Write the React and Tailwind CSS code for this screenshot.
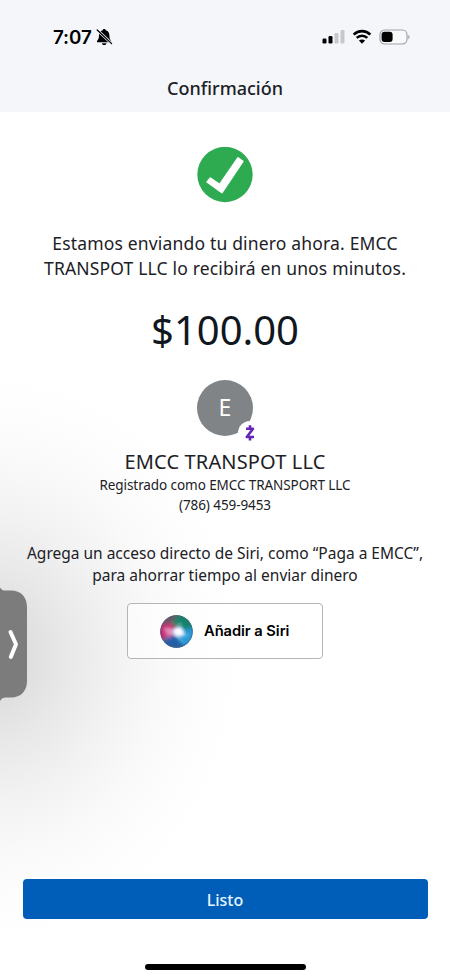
function StatusBar() {
  return (
    <div className="flex h-[74px] items-center justify-between pl-[53px] pr-[39px]">
      <div className="flex items-center gap-[4px]">
        <span className="mt-[2px] font-['Inter'] text-[18.8px] font-semibold leading-6 tracking-[-0.1px] text-black">7:07</span>
        <svg width="17" height="18" viewBox="0 0 17 18">
          <path d="M8.200 1C9.100 1 9.600 1.500 9.700 2.300C12.500 3 13.400 5 13.400 7.600C13.400 10.800 14.400 11.600 15.200 13V14.200H1V13C2 11.600 3 10.800 3 7.600C3 5 4 3 6.700 2.300C6.800 1.500 7.300 1 8.200 1Z" fill="#000" />
          <path d="M5.900 15.200H10.500C10.200 16.500 9.400 17 8.200 17S6.200 16.500 5.900 15.200Z" fill="#000" />
          <path d="M1.200 2L15.600 15.600" stroke="#f4f6fa" strokeWidth="2.700" />
          <path d="M1.200 2L15.600 15.600" stroke="#000" strokeWidth="1.300" strokeLinecap="round" />
        </svg>
      </div>
      <div className="flex items-center">
        <svg width="23" height="16" viewBox="0 0 23 16">
          <rect x="0.500" y="9.500" width="4" height="5" rx="1.200" fill="#000" />
          <rect x="6.500" y="7" width="4" height="7.500" rx="1.200" fill="#000" />
          <rect x="12.500" y="4" width="4" height="10.500" rx="1.200" fill="#c6c8cb" />
          <rect x="18.500" y="1" width="4" height="13.500" rx="1.200" fill="#c6c8cb" />
        </svg>
        <svg className="ml-[7px]" width="20" height="16" viewBox="0 0 20 16">
          <path d="M1.700 5.600C6.300.9 13.700.9 18.300 5.600" stroke="#000" strokeWidth="2.700" fill="none" />
          <path d="M4.700 8.900c3-3 7.600-3 10.600 0" stroke="#000" strokeWidth="2.500" fill="none" />
          <path d="M10 14.800l-3.100-3.200c1.700-1.600 4.500-1.600 6.200 0z" fill="#000" />
        </svg>
        <svg className="ml-[7px]" width="32" height="16" viewBox="0 0 32 16">
          <rect x="1" y="1" width="27" height="14" rx="4.700" fill="#f8f9fb" stroke="#a0a2a5" strokeWidth="1.200" />
          <rect x="2.600" y="2.700" width="11" height="10.400" rx="3" fill="#000" />
          <path d="M29.500 5.800c1.300.8 1.300 3.600 0 4.400z" fill="#808285" />
        </svg>
      </div>
    </div>
  );
}

function SuccessIcon() {
  return (
    <svg width="56" height="56" viewBox="0 0 56 56">
      <circle cx="28" cy="27.500" r="27.700" fill="#2eaa51" />
      <path d="M10 35L24.900 45.800L46 14.300L41 10.700L22.600 37.300L13.400 31Z" fill="#fff" stroke="#fff" strokeWidth="1.400" strokeLinejoin="round" />
    </svg>
  );
}

function Avatar() {
  return (
    <div className="relative flex h-[56px] w-[56px] items-center justify-center rounded-full bg-[#808487] text-[23px] leading-none text-white">
      E
      <div className="absolute left-[41px] top-[41px] flex h-[24px] w-[24px] items-center justify-center rounded-full bg-white">
        <svg width="10" height="18" viewBox="0 0 10 18">
          <path d="M1 4.800H8L1.800 13H9M5 1.200V4.800M5 13V16.600" stroke="#6324b7" strokeWidth="2.600" fill="none" strokeLinejoin="round" />
        </svg>
      </div>
    </div>
  );
}

function SiriIcon() {
  return (
    <svg width="33" height="33" viewBox="0 0 33 33">
      <defs>
        <radialGradient id="core">
          <stop offset="0" stopColor="#fff" />
          <stop offset="0.400" stopColor="#f3f6ff" stopOpacity="0.850" />
          <stop offset="1" stopColor="#c0c8f5" stopOpacity="0" />
        </radialGradient>
        <filter id="soft" x="-30%" y="-30%" width="160%" height="160%">
          <feGaussianBlur stdDeviation="2" />
        </filter>
        <filter id="glow" x="-30%" y="-30%" width="160%" height="160%">
          <feGaussianBlur stdDeviation="0.800" />
        </filter>
        <clipPath id="orb"><circle cx="16.500" cy="16.500" r="16.200" /></clipPath>
      </defs>
      <g clipPath="url(#orb)">
        <rect width="33" height="33" fill="#355984" />
        <g filter="url(#soft)">
          <path d="M-2 9L15 3L17 17L9 26L-2 24z" fill="#c9286f" />
          <path d="M12-2H34V14L21 15L11 9z" fill="#168369" />
          <path d="M18 16L35 12V26L24 32L16 24z" fill="#279bd8" />
          <path d="M1 25L15 19L26 34H5z" fill="#245fa5" />
          <path d="M6-2H18L14 6L3 10z" fill="#665564" />
          <path d="M5 13L16 15L8 23z" fill="#ea83b3" />
        </g>
        <g filter="url(#glow)">
          <path d="M2 13C11 11 16 15 30 20C22 26 10 22 2 13z" fill="#d9e8f8" opacity="0.220" />
          <path d="M20 7C25 11 23 15 18 17C20 23 23 26 26 28C18 26 14 22 14 17C14 12 16 9 20 7z" fill="#c5e3f2" opacity="0.300" />
          <path d="M13 15.500L18 13.500L21 13L21.500 16L25 19.500L21 20L17 18.500z" fill="#fff" opacity="0.800" />
        </g>
        <ellipse cx="18.500" cy="17" rx="8.500" ry="7" fill="url(#core)" />
      </g>
      <circle cx="16.500" cy="16.500" r="15.700" fill="none" stroke="#56617d" strokeWidth="0.900" opacity="0.600" />
    </svg>
  );
}

function SideHandle() {
  return (
    <div className="absolute left-0 top-[583px] h-[122px] w-[28px]">
      <svg width="28" height="122" viewBox="0 0 28 122">
        <path d="M0 4.500C1.500 7 3 7.500 6 7.500H11C21 7.500 27 14 27 24V98C27 108 21 114.500 11 114.500H6C3 114.500 1.500 115.500 0 118z" fill="#7c7c7c" />
        <path d="M10.500 49L16 61.200L10.800 74" fill="none" stroke="#fff" strokeWidth="4" strokeLinecap="round" strokeLinejoin="round" />
      </svg>
    </div>
  );
}

export default function App() {
  return (
    <div className="relative flex h-[980px] w-[450px] flex-col overflow-hidden bg-white font-['Noto_Sans',sans-serif] text-[#1c2126]">
      <div className="absolute inset-x-0 bottom-0 top-[112px] bg-[radial-gradient(ellipse_250px_285px_at_-10px_545px,#dadada_0%,#dedede_14%,#e9e9e9_32%,#f2f2f2_50%,#f9f9f9_68%,#fdfdfd_85%,#ffffff_100%)]" />
      <header className="relative h-[112px] shrink-0 bg-[#f4f6fa]">
        <StatusBar />
        <h1 className="text-center text-[18px] font-medium leading-[28px]">Confirmación</h1>
      </header>
      <main className="relative flex flex-1 flex-col items-center pt-[35px] text-center">
        <SuccessIcon />
        <p className="mt-[28px] whitespace-nowrap text-[17.5px] leading-[24.500px] tracking-[0.17px]">
          Estamos enviando tu dinero ahora. EMCC<br />TRANSPOT LLC lo recibirá en unos minutos.
        </p>
        <div className="mt-[26px] text-[40px] leading-[48px] text-[#10171e]">$100.00</div>
        <div className="mt-[25.500px]"><Avatar /></div>
        <div className="mt-[12.500px] text-[20px] leading-[28px] tracking-[0.15px]">EMCC TRANSPOT LLC</div>
        <div className="text-[13.5px] leading-[19.500px] tracking-[-0.08px]">Registrado como EMCC TRANSPORT LLC<br />(786) 459-9453</div>
        <p className="mt-[27px] whitespace-nowrap text-[15.5px] leading-[22px]">
          Agrega un acceso directo de Siri, como “Paga a EMCC”,<br />para ahorrar tiempo al enviar dinero
        </p>
        <button className="mt-[17px] flex h-[56px] w-[196px] items-center rounded-[4px] border border-[#b5b5b5] bg-white/60 pl-[32px]">
          <SiriIcon />
          <span className="ml-[11px] mt-[1px] whitespace-nowrap font-['Inter'] text-[14.7px] font-semibold tracking-[-0.05px] text-black">Añadir a Siri</span>
        </button>
      </main>
      <footer className="relative flex shrink-0 flex-col items-center pb-[10px]">
        <button className="h-[40px] w-[405px] rounded-[4px] bg-[#005eb8] pt-[2px] text-[16px] font-medium text-[#e7f6ff]">Listo</button>
        <div className="mt-[45px] h-[6px] w-[161px] rounded-full bg-black" />
      </footer>
      <SideHandle />
    </div>
  );
}
